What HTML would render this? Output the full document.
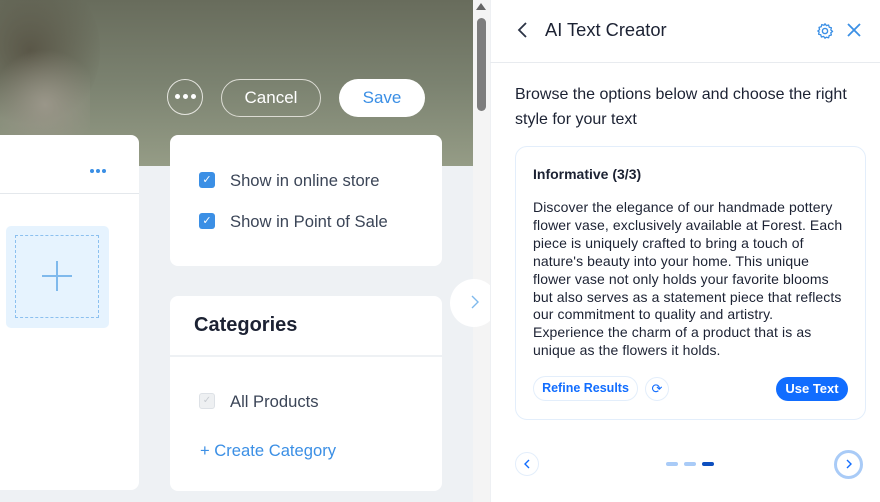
<!DOCTYPE html>
<html><head><meta charset="utf-8"><style>
*{box-sizing:border-box;margin:0;padding:0}
body{width:880px;height:502px;overflow:hidden;position:relative;background:#eef1f4;font-family:"Liberation Sans",sans-serif}
.a{position:absolute}
.hero{left:0;top:0;width:473px;height:166px;background:linear-gradient(180deg,#686c5c 0%,#7b8270 50%,#959c86 100%)}
.blur{left:-40px;top:-30px;width:140px;height:160px;border-radius:50%;background:radial-gradient(circle,#5a5748 0%,rgba(90,87,72,0) 70%)}
.blur2{left:0;top:40px;width:90px;height:130px;background:radial-gradient(circle,#9a9689 0%,rgba(154,150,137,0) 70%)}
.card{background:#fff;border-radius:8px}
.cb{width:16px;height:16px;border-radius:3px;background:#3b8fe5;color:#fff;font-size:11px;text-align:center;line-height:16px}
.t{color:#3b4557;font-size:16.6px}
.dot{width:5px;height:5px;border-radius:50%;background:#fff;display:inline-block;margin:0 1.5px}
</style></head><body>
<div class="a hero"></div><div class="a blur"></div><div class="a blur2"></div>
<div class="a" style="left:167px;top:79px;width:36px;height:36px;border:1.5px solid #e6e6e0;border-radius:50%;text-align:center;line-height:30px"><span class="dot"></span><span class="dot"></span><span class="dot"></span></div>
<div class="a" style="left:221px;top:79px;width:100px;height:38px;border:1.5px solid #dcdcd4;border-radius:20px;color:#fff;text-align:center;font-size:17px;line-height:35px">Cancel</div>
<div class="a" style="left:339px;top:79px;width:86px;height:38px;background:#fff;border-radius:20px;color:#3b8fe5;text-align:center;font-size:17px;line-height:38px">Save</div>

<div class="a card" style="left:-8px;top:135px;width:147px;height:355px"></div>
<div class="a" style="left:0;top:193px;width:139px;height:1px;background:#e4e8ec"></div>
<div class="a" style="left:89px;top:160px"><span class="dot" style="background:#3b8fe5;width:4px;height:4px;margin:0 1px"></span><span class="dot" style="background:#3b8fe5;width:4px;height:4px;margin:0 1px"></span><span class="dot" style="background:#3b8fe5;width:4px;height:4px;margin:0 1px"></span></div>
<div class="a" style="left:6px;top:226px;width:103px;height:102px;background:#e6f3fe;border-radius:5px"></div>
<div class="a" style="left:15px;top:235px;width:84px;height:83px;border:1px dashed #8cc0ef"></div>
<div class="a" style="left:42px;top:275px;width:30px;height:1.5px;background:#7fb9ec"></div>
<div class="a" style="left:56px;top:261px;width:1.5px;height:30px;background:#7fb9ec"></div>

<div class="a card" style="left:170px;top:135px;width:272px;height:131px"></div>
<div class="a cb" style="left:199px;top:172px">✓</div>
<div class="a t" style="left:230px;top:171px">Show in online store</div>
<div class="a cb" style="left:199px;top:213px">✓</div>
<div class="a t" style="left:230px;top:212px">Show in Point of Sale</div>

<div class="a card" style="left:170px;top:296px;width:272px;height:195px"></div>
<div class="a" style="left:194px;top:314px;font-size:20px;font-weight:bold;color:#1c2233">Categories</div>
<div class="a" style="left:170px;top:355px;width:272px;height:2px;background:#eef1f4"></div>
<div class="a" style="left:199px;top:393px;width:16px;height:16px;border:1px solid #dde1e6;background:#eef0f2;border-radius:3px;color:#c8ccd2;font-size:10px;text-align:center;line-height:14px">✓</div>
<div class="a t" style="left:230px;top:392px">All Products</div>
<div class="a" style="left:200px;top:441px;color:#3b8fe5;font-size:16.6px">+ Create Category</div>

<div class="a" style="left:473px;top:0;width:17px;height:502px;background:#f4f4f4"></div>
<div class="a" style="left:476px;top:3px;width:0;height:0;border-left:5px solid transparent;border-right:5px solid transparent;border-bottom:7px solid #666"></div>
<div class="a" style="left:477px;top:18px;width:9px;height:93px;background:#7d7d7d;border-radius:5px"></div>
<div class="a" style="left:450px;top:279px;width:48px;height:48px;border-radius:50%;background:#fff"></div>
<svg class="a" style="left:470px;top:295px" width="10" height="14"><path d="M2 1L8 7L2 13" stroke="#7fb9ec" stroke-width="1.4" fill="none"/></svg>

<div class="a" style="left:490px;top:0;width:390px;height:502px;background:#fff;border-left:1px solid #eef0f3"></div>
<div class="a" style="left:490px;top:62px;width:390px;height:1px;background:#e8ebef"></div>
<svg class="a" style="left:515px;top:21px" width="16" height="18"><path d="M11 2 L4 9 L11 16" stroke="#2b3345" stroke-width="1.8" fill="none"/></svg>
<div class="a" style="left:545px;top:19px;font-size:18.3px;color:#1c2233">AI Text Creator</div>
<svg class="a" style="left:816px;top:22px" width="18" height="18" viewBox="0 0 18 18"><circle cx="9" cy="9" r="2.6" stroke="#3b8fe5" stroke-width="1.4" fill="none"/><path d="M9 1.8l1.4 1.8 2.2-.6.6 2.2 2.2.6-.6 2.2 1.8 1.4-1.8 1.4.6 2.2-2.2.6-.6 2.2-2.2-.6L9 16.2l-1.4-1.8-2.2.6-.6-2.2-2.2-.6.6-2.2L1.8 9l1.8-1.4-.6-2.2 2.2-.6.6-2.2 2.2.6z" stroke="#3b8fe5" stroke-width="1.3" fill="none" stroke-linejoin="round"/></svg>
<svg class="a" style="left:846px;top:22px" width="16" height="16"><path d="M2 2L14 14M14 2L2 14" stroke="#3b8fe5" stroke-width="1.8"/></svg>
<div class="a" style="left:515px;top:82px;width:360px;font-size:16px;line-height:25px;color:#1c2233">Browse the options below and choose the right style for your text</div>

<div class="a" style="left:515px;top:146px;width:351px;height:274px;border:1.5px solid #e3eefb;border-radius:12px"></div>
<div class="a" style="left:533px;top:166px;font-size:14px;font-weight:bold;color:#1c2233">Informative (3/3)</div>
<div class="a" style="left:533px;top:199px;white-space:nowrap;font-size:14px;line-height:17.9px;color:#1c2233;letter-spacing:0.1px">Discover the elegance of our handmade pottery<br>flower vase, exclusively available at Forest. Each<br>piece is uniquely crafted to bring a touch of<br>nature's beauty into your home. This unique<br>flower vase not only holds your favorite blooms<br>but also serves as a statement piece that reflects<br>our commitment to quality and artistry.<br>Experience the charm of a product that is as<br>unique as the flowers it holds.</div>
<div class="a" style="left:533px;top:376px;width:105px;height:25px;border:1.5px solid #e3eefb;border-radius:13px;color:#116dff;font-size:12.5px;font-weight:bold;text-align:center;line-height:22px">Refine Results</div>
<div class="a" style="left:645px;top:377px;width:24px;height:24px;border:1.5px solid #e3eefb;border-radius:50%;color:#116dff;font-size:13px;text-align:center;line-height:21px">⟳</div>
<div class="a" style="left:776px;top:377px;width:72px;height:24px;background:#116dff;border-radius:12px;color:#fff;font-size:13px;font-weight:bold;text-align:center;line-height:24px">Use Text</div>

<div class="a" style="left:515px;top:452px;width:24px;height:24px;border:1.5px solid #e3eefb;border-radius:50%"></div>
<svg class="a" style="left:523px;top:459px" width="8" height="10"><path d="M6 1L2 5L6 9" stroke="#116dff" stroke-width="1.4" fill="none"/></svg>
<div class="a" style="left:666px;top:462px;width:12px;height:4px;border-radius:2px;background:#a9cbf7"></div>
<div class="a" style="left:684px;top:462px;width:12px;height:4px;border-radius:2px;background:#a9cbf7"></div>
<div class="a" style="left:702px;top:462px;width:12px;height:4px;border-radius:2px;background:#0d4fbf"></div>
<div class="a" style="left:834px;top:450px;width:29px;height:29px;border:3px solid #a9cbf7;border-radius:50%"></div>
<svg class="a" style="left:845px;top:459px" width="8" height="10"><path d="M2 1L6 5L2 9" stroke="#116dff" stroke-width="1.4" fill="none"/></svg>
</body></html>
